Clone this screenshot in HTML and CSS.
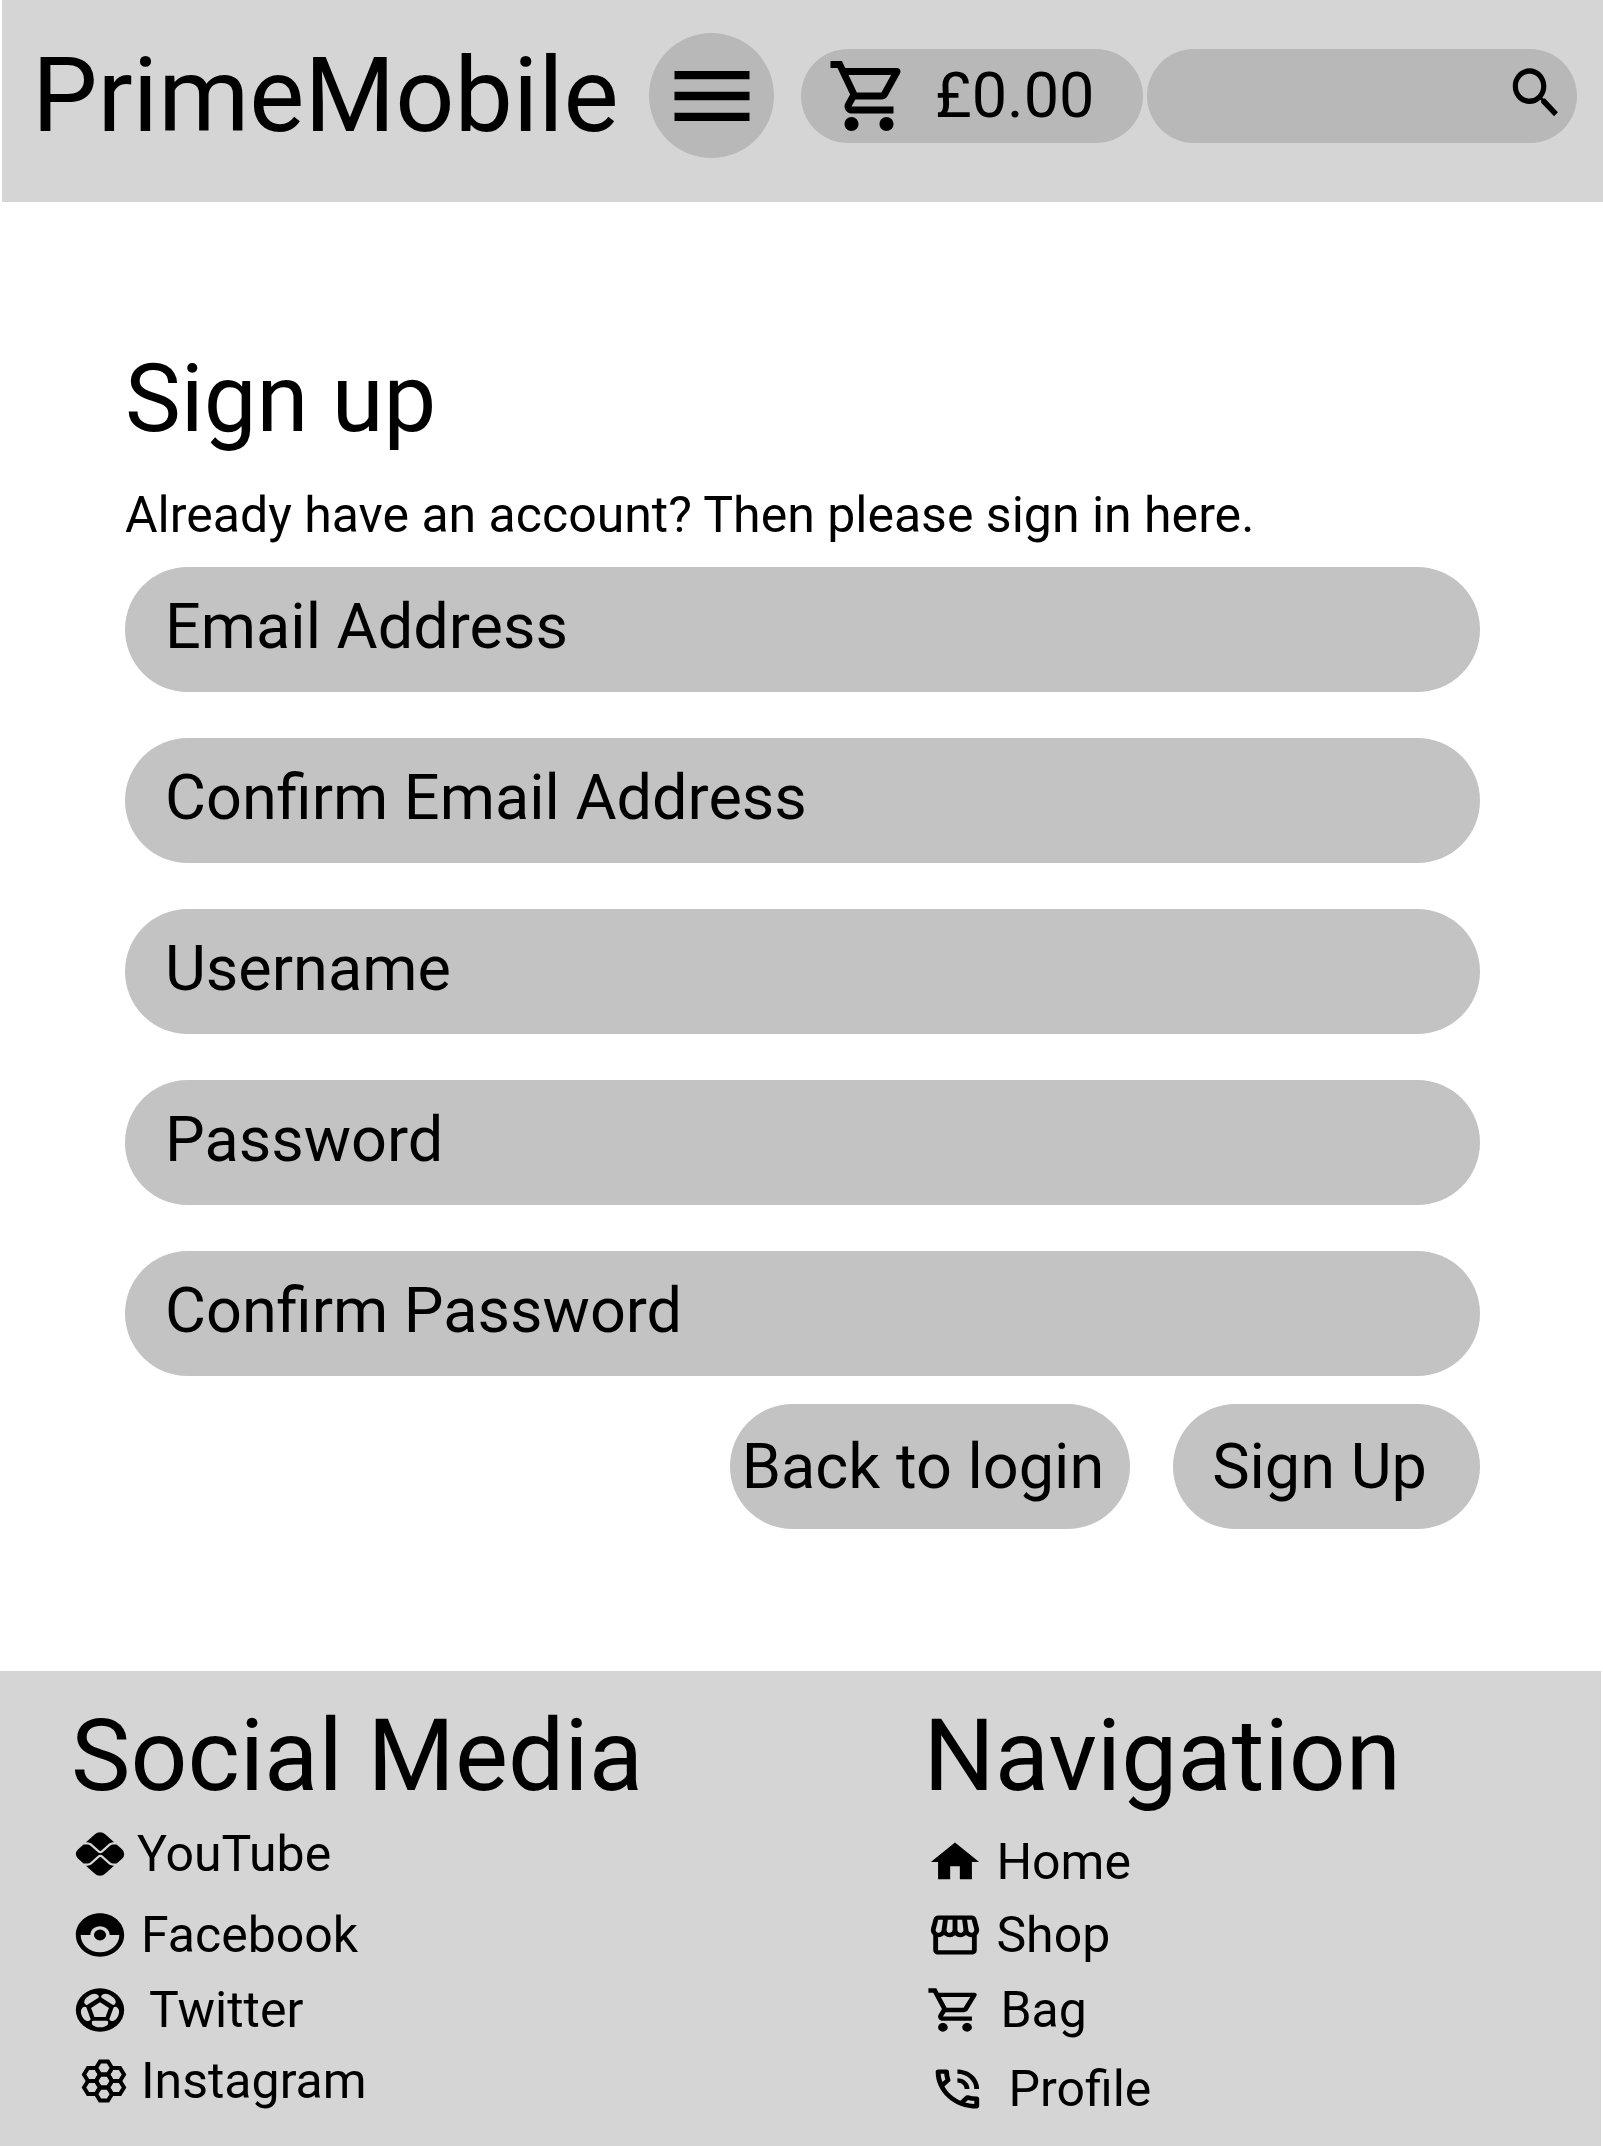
FILE: index.html
```html
<!DOCTYPE html>
<html lang="en">
<head>
<meta charset="utf-8">
<meta name="viewport" content="width=device-width, initial-scale=1">
<title>PrimeMobile</title>
<link rel="stylesheet" href="styles.css">
</head>
<body>
<header class="header">
  <a class="brand" href="#">PrimeMobile</a>
  <button class="menu" type="button" aria-label="Menu">
    <svg class="menu-icon" viewBox="0 0 24 24"><path d="M3 18h18v-2H3v2zm0-5h18v-2H3v2zm0-7v2h18V6H3z"/></svg>
  </button>
  <a class="cart" href="#">
    <svg class="cart-icon" viewBox="0 0 24 24"><path d="M15.55 13c.75 0 1.41-.41 1.75-1.03l3.58-6.49c.37-.66-.11-1.48-.87-1.48H5.21l-.94-2H1v2h2l3.6 7.59-1.35 2.44C4.52 15.37 5.48 17 7 17h12v-2H7l1.1-2h7.45zM6.16 6h12.15l-2.76 5H8.53L6.16 6zM7 18c-1.1 0-1.99.9-1.99 2S5.9 22 7 22s2-.9 2-2-.9-2-2-2zm10 0c-1.1 0-1.99.9-1.99 2s.89 2 1.99 2 2-.9 2-2-.9-2-2-2z"/></svg>
    <span>£0.00</span>
  </a>
  <form class="search" role="search">
    <input class="search-input" type="search" aria-label="Search">
    <button class="search-button" type="submit" aria-label="Search">
      <svg class="search-icon" viewBox="0 0 24 24" preserveAspectRatio="none"><path d="M15.5 14h-.79l-.28-.27C15.41 12.59 16 11.11 16 9.5 16 5.91 13.09 3 9.5 3S3 5.91 3 9.5 5.91 16 9.5 16c1.61 0 3.09-.59 4.23-1.57l.27.28v.79l5 4.99L20.49 19l-4.99-5zm-6 0C7.01 14 5 11.99 5 9.5S7.01 5 9.5 5 14 7.01 14 9.5 11.99 14 9.5 14z"/></svg>
    </button>
  </form>
</header>

<main class="main">
  <h1 class="title">Sign up</h1>
  <p class="intro">Already have an account? Then please sign in <a href="#">here</a>.</p>
  <form class="form">
    <input class="field" type="email" placeholder="Email Address" aria-label="Email Address">
    <input class="field" type="email" placeholder="Confirm Email Address" aria-label="Confirm Email Address">
    <input class="field" type="text" placeholder="Username" aria-label="Username">
    <input class="field" type="password" placeholder="Password" aria-label="Password">
    <input class="field" type="password" placeholder="Confirm Password" aria-label="Confirm Password">
    <div class="actions">
      <button class="button button-back" type="button">Back to login</button>
      <button class="button button-submit" type="submit">Sign Up</button>
    </div>
  </form>
</main>

<footer class="footer">
  <section>
    <h2 class="footer-title">Social Media</h2>
    <ul class="links links-social">
      <li><a class="link gap-small" href="#">
        <svg class="icon" viewBox="0 0 24 24" preserveAspectRatio="none"><path d="M15.45 16.52l-3.01-3.01c-.11-.11-.24-.13-.31-.13s-.2.02-.31.13L8.8 16.53c-.34.34-.87.89-2.64.89l3.71 3.7a3 3 0 0 0 4.24 0l3.72-3.71c-.91 0-1.67-.18-2.38-.89zM8.8 7.47l3.02 3.02c.08.08.2.13.31.13s.23-.05.31-.13l2.99-2.99c.71-.74 1.52-.91 2.43-.91l-3.72-3.71a3 3 0 0 0-4.24 0l-3.71 3.7c1.76 0 2.3.58 2.61.89z"/><path d="M21.11 9.85l-2.25-2.26H17.6c-.54 0-1.08.22-1.45.61l-3 3c-.28.28-.65.42-1.02.42a1.5 1.5 0 0 1-1.02-.42L8.09 8.17c-.38-.38-.9-.6-1.45-.6H5.17l-2.29 2.3a3 3 0 0 0 0 4.24l2.29 2.3h1.48c.54 0 1.06-.22 1.45-.6l3.02-3.02c.28-.28.65-.42 1.02-.42.37 0 .74.14 1.02.42l3.01 3.01c.38.38.9.6 1.45.6h1.26l2.25-2.26a3.04 3.04 0 0 0-.02-4.29z"/></svg>
        <span>YouTube</span></a></li>
      <li><a class="link gap-medium" href="#">
        <svg class="icon" viewBox="0 0 24 24" preserveAspectRatio="none"><path d="M14.5 12a2.5 2.5 0 0 1-5 0 2.5 2.5 0 0 1 5 0zm7.5 0c0 5.52-4.48 10-10 10S2 17.52 2 12 6.48 2 12 2s10 4.48 10 10zm-2 0h-4c0-2.21-1.79-4-4-4s-4 1.79-4 4H4c0 4.41 3.59 8 8 8s8-3.59 8-8z"/></svg>
        <span>Facebook</span></a></li>
      <li><a class="link gap-large" href="#">
        <svg class="icon" viewBox="0 0 24 24" preserveAspectRatio="none">
          <circle cx="12" cy="12" r="10"/>
          <g class="icon-hole">
            <path d="M12 8.4l3.7 2.7-1.4 4.1H9.7L8.300 11.100z"/>
            <path id="panel" d="M9.200 17h5.600q1 .3.400 1.700-.9 1.300-3.200 1.300t-3.200-1.300q-.6-1.400.4-1.700z"/>
            <use href="#panel" transform="rotate(72 12 12)"/>
            <use href="#panel" transform="rotate(144 12 12)"/>
            <use href="#panel" transform="rotate(216 12 12)"/>
            <use href="#panel" transform="rotate(288 12 12)"/>
          </g>
        </svg>
        <span>Twitter</span></a></li>
      <li><a class="link gap-medium" href="#">
        <svg class="icon" viewBox="0 0 58 52">
          <g class="icon-line">
            <path id="cell" d="M25 26l4-6.5h8l4 6.5-4 6.5h-8z"/>
            <use href="#cell" y="-13"/>
            <use href="#cell" y="13"/>
            <use href="#cell" x="-12" y="-6.5"/>
            <use href="#cell" x="-12" y="6.5"/>
            <use href="#cell" x="12" y="-6.5"/>
            <use href="#cell" x="12" y="6.5"/>
          </g>
        </svg>
        <span>Instagram</span></a></li>
    </ul>
  </section>
  <nav aria-label="Footer">
    <h2 class="footer-title">Navigation</h2>
    <ul class="links links-nav">
      <li><a class="link gap-medium" href="#">
        <svg class="icon" viewBox="0 0 24 24" preserveAspectRatio="none"><path d="M10 20v-6h4v6h5v-8h3L12 3 2 12h3v8z"/></svg>
        <span>Home</span></a></li>
      <li><a class="link gap-medium" href="#">
        <svg class="icon" viewBox="0 0 24 24" preserveAspectRatio="none"><path d="M21.9 8.89l-1.05-4.37c-.22-.9-1-1.52-1.91-1.52H5.05c-.9 0-1.69.63-1.9 1.52L2.1 8.89c-.24 1.02-.02 2.06.62 2.88.08.11.19.19.28.29V19c0 1.1.9 2 2 2h14c1.1 0 2-.9 2-2v-6.94c.09-.09.2-.18.28-.28.64-.82.87-1.87.62-2.89zm-2.99-3.9l1.05 4.37c.1.42.01.84-.25 1.17-.14.18-.44.47-.94.47-.61 0-1.14-.49-1.21-1.14L16.98 5l1.93-.01zM13 5h1.96l.54 4.52c.05.39-.07.78-.33 1.07-.22.26-.54.41-.95.41-.67 0-1.22-.59-1.22-1.31V5zM8.49 9.52L9.04 5H11v4.69c0 .72-.55 1.31-1.29 1.31-.34 0-.65-.15-.89-.41-.25-.29-.37-.68-.33-1.07zm-4.45-.16L5.05 5h1.97l-.58 4.86c-.08.65-.6 1.14-1.21 1.14-.49 0-.8-.29-.93-.47-.27-.32-.36-.75-.26-1.17zM5 19v-6.03c.08.01.15.03.23.03.87 0 1.66-.36 2.24-.95.6.6 1.4.95 2.31.95.87 0 1.65-.36 2.23-.93.59.57 1.39.93 2.29.93.84 0 1.64-.35 2.24-.95.58.59 1.37.95 2.24.95.08 0 .15-.02.23-.03V19H5z"/></svg>
        <span>Shop</span></a></li>
      <li><a class="link gap-wide" href="#">
        <svg class="icon" viewBox="0 0 24 24" preserveAspectRatio="none"><path d="M15.55 13c.75 0 1.41-.41 1.75-1.03l3.58-6.49c.37-.66-.11-1.48-.87-1.48H5.21l-.94-2H1v2h2l3.6 7.59-1.35 2.44C4.52 15.37 5.48 17 7 17h12v-2H7l1.1-2h7.45zM6.16 6h12.15l-2.76 5H8.53L6.16 6zM7 18c-1.1 0-1.99.9-1.99 2S5.9 22 7 22s2-.9 2-2-.9-2-2-2zm10 0c-1.1 0-1.99.9-1.99 2s.89 2 1.99 2 2-.9 2-2-.9-2-2-2z"/></svg>
        <span>Bag</span></a></li>
      <li><a class="link gap-extra" href="#">
        <svg class="icon" viewBox="-1 0 24 24" preserveAspectRatio="none"><path d="M15 12h2c0-2.76-2.24-5-5-5v2c1.66 0 3 1.34 3 3zm4 0h2c0-4.97-4.03-9-9-9v2c3.87 0 7 3.13 7 7zm1 3.5c-1.25 0-2.45-.2-3.57-.57-.1-.03-.21-.05-.31-.05-.26 0-.51.1-.71.29l-2.2 2.2c-2.83-1.44-5.15-3.75-6.59-6.58l2.2-2.21c.28-.27.36-.66.25-1.01C8.7 6.45 8.5 5.25 8.5 4c0-.55-.45-1-1-1H4c-.55 0-1 .45-1 1 0 9.39 7.61 17 17 17 .55 0 1-.45 1-1v-3.5c0-.55-.45-1-1-1zM5.03 5h1.5c.07.88.22 1.75.46 2.59L5.79 8.8c-.41-1.21-.67-2.48-.76-3.8zM19 18.97c-1.32-.09-2.6-.35-3.8-.75l1.2-1.2c.85.24 1.71.39 2.59.45v1.5z"/></svg>
        <span>Profile</span></a></li>
    </ul>
  </nav>
</footer>
</body>
</html>
```

FILE: styles.css
```css
*,
*::before,
*::after {
  box-sizing: border-box;
}

body {
  display: flex;
  flex-direction: column;
  min-height: 100vh;
  margin: 0;
  background: #fff;
  color: #000;
  font-family: Roboto, "Liberation Sans", sans-serif;
}

h1,
h2,
p,
ul {
  margin: 0;
  padding: 0;
  font-weight: 400;
}

a {
  color: inherit;
  text-decoration: none;
}

button,
input {
  border: 0;
  padding: 0;
  color: inherit;
  font: inherit;
}

svg {
  display: block;
  flex: none;
}

/* Header */
.header {
  display: flex;
  align-items: center;
  margin-left: 2px;
  padding: 33px 26px 44px 30px;
  background: #d5d5d5;
}

.brand {
  font-size: 104px;
  line-height: 124px;
}

.menu {
  display: flex;
  flex: none;
  align-items: center;
  justify-content: center;
  width: 125px;
  height: 125px;
  margin: 0 27px 0 auto;
  border-radius: 50%;
  background: #b8b8b8;
}

.menu-icon {
  width: 100px;
  height: 100px;
}

.cart {
  display: flex;
  flex: none;
  align-items: center;
  gap: 24px;
  width: 342px;
  height: 94px;
  padding-left: 26px;
  border-radius: 47px;
  background: #b8b8b8;
  font-size: 63px;
}

.cart-icon {
  width: 84px;
  height: 84px;
}

.search {
  display: flex;
  align-items: center;
  width: 430px;
  height: 94px;
  margin-left: 4px;
  padding: 0 10px 6px 32px;
  border-radius: 47px;
  background: #b8b8b8;
}

.search-input {
  flex: 1;
  min-width: 0;
  background: transparent;
  font-size: 50px;
}

.search-button {
  background: transparent;
}

.search-icon {
  width: 62px;
  height: 66px;
}

/* Sign-up form */
.main {
  padding: 141px 123px 142px 125px;
}

.title {
  margin-bottom: 30px;
  font-size: 94px;
  line-height: 112px;
}

.intro {
  margin-bottom: 22px;
  font-size: 50px;
  line-height: 60px;
}

.form {
  display: grid;
  gap: 46px;
}

.field {
  width: 100%;
  height: 125px;
  padding: 0 40px 6px;
  border-radius: 63px;
  background: #c3c3c3;
  font-size: 63px;
}

.field::placeholder {
  color: #000;
  opacity: 1;
}

.actions {
  display: flex;
  justify-content: flex-end;
  gap: 43px;
  margin-top: -18px;
}

.button {
  height: 125px;
  padding-right: 14px;
  border-radius: 63px;
  background: #c3c3c3;
  font-size: 63px;
}

.button-back {
  width: 400px;
}

.button-submit {
  width: 307px;
}

/* Footer */
.footer {
  display: grid;
  flex: 1;
  grid-template-columns: 39fr 31fr;
  margin-right: 2px;
  padding: 27px 0 27px 71px;
  background: #d5d5d5;
}

.footer-title {
  font-size: 100px;
  line-height: 116px;
}

.links {
  display: grid;
  list-style: none;
  font-size: 50px;
  line-height: 60px;
}

.links-social {
  grid-template-rows: 81px 75px 71px 60px;
  margin-top: 10px;
}

.links-nav {
  grid-template-rows: 73px 75px 79px 60px;
  margin: 18px 0 0 3px;
}

.link {
  display: inline-flex;
  align-items: center;
}

.gap-small {
  gap: 8px;
}

.gap-medium {
  gap: 12px;
}

.gap-wide {
  gap: 16px;
}

.gap-large {
  gap: 20px;
}

.gap-extra {
  gap: 24px;
}

.icon {
  width: 58px;
  height: 52px;
}

.icon-hole {
  fill: #d5d5d5;
}

.icon-line {
  fill: none;
  stroke: #000;
  stroke-width: 4;
}
```
